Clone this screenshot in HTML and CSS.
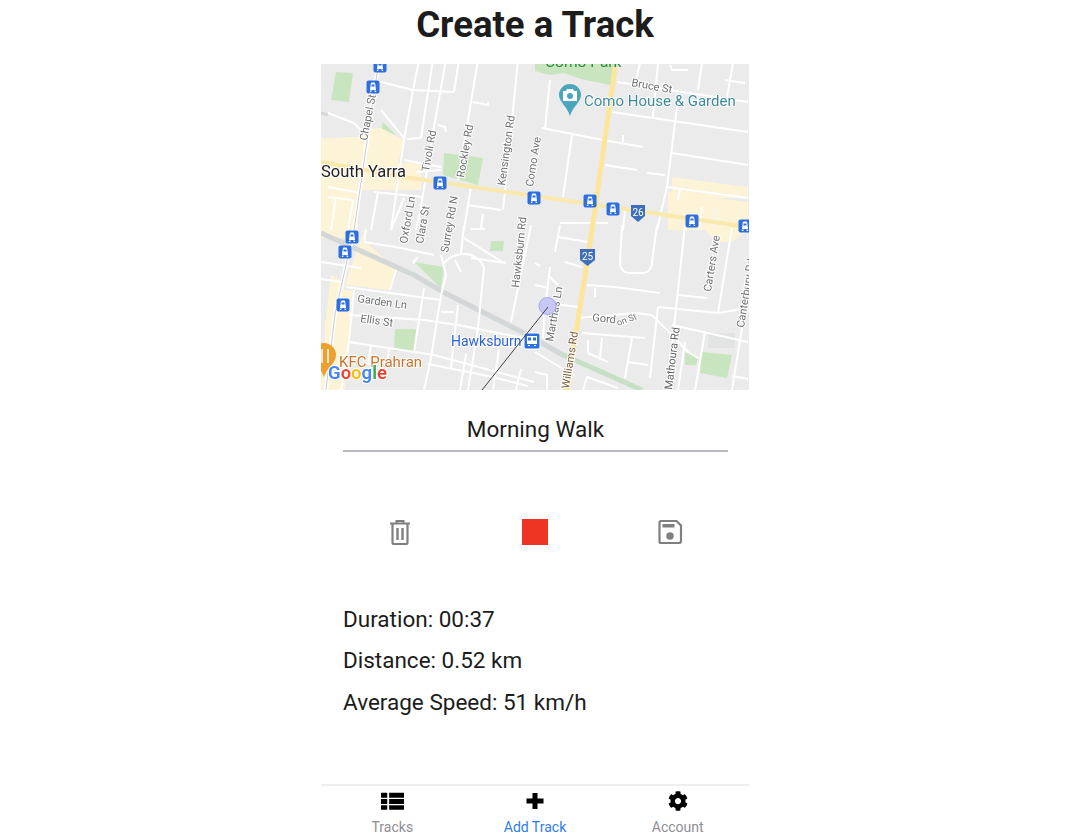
FILE: index.html
```html
<!DOCTYPE html>
<html lang="en">
<head>
  <meta charset="UTF-8" />
  <meta name="viewport" content="width=device-width, initial-scale=1.0"/>
  <title>Create a Track</title>
  <link rel="stylesheet" href="styles.css">
</head>
<body>
  <div class="app">
    <h1 class="title">Create a Track</h1>

    <svg class="map" viewBox="0 0 428 326" width="428" height="326">
      <defs>
        <symbol id="stop" viewBox="0 0 14 14">
          <rect x="0.5" y="0.5" width="13" height="13" rx="2" fill="#2d6fe0"/>
          <path d="M5.500 2.500h3l.8 1.500.7 6H4l.7-6zM4.500 10.500h1.500l-1 1.500H3.500zM8 10.500h1.500l1 1.500H9z" fill="#fff"/>
          <rect x="5.500" y="4.500" width="3" height="2" fill="#2d6fe0"/>
        </symbol>
      </defs>

      <rect width="428" height="326" fill="#ebebeb"/>

      <!-- parks -->
      <g fill="#c8e5c0">
        <path d="M15 8l17 1-4 29-18-2z"/>
        <path d="M62 58l13 13-15-3z"/>
        <path d="M123 89l39 5-5 27-35-10z"/>
        <path d="M214-4h83l-3 26-34-7-17-6-14 2-15-4z"/>
        <path d="M170 177h13l-1 10h-13z"/>
        <path d="M93 198l30 5-3 21z"/>
        <path d="M74 265h21l-1 22H73z"/>
        <path d="M381 288l30 3-5 23-27-5z"/>
        <path d="M364 288l13 6-2 7h-11z"/>
      </g>
      <path d="M387 269h27v15h-27z" fill="#e2e3e3"/>

      <!-- commercial areas -->
      <g fill="#fdf3d6">
        <path d="M0 74l15 0 10-1 15 0 5-7 15-2 23 12-6 23h23v27H37v48H0z"/>
        <path d="M45 161l0 17 30 28-7 20-41-5-17-10-6 50L0 326h24l8-100h-10z"/>
        <path d="M351 113l76 10v11h-76z"/>
        <path d="M347 128l80 10v28l-16 12h-17l-10-12h-37z"/>
      </g>

      <!-- rail line -->
      <path d="M0 169l93 42 29 17 85 43 33 19" fill="none" stroke="#d4d7d8" stroke-width="5"/>
      <path d="M240 290l81 36" fill="none" stroke="#c7dfc4" stroke-width="5"/>
      <path d="M0 49l7 2" fill="none" stroke="#d4d7d8" stroke-width="3"/>

      <!-- streets -->
      <g fill="none" stroke="#fff" stroke-width="2" stroke-linejoin="round">
        <!-- upper left -->
        <path d="M52 16l40 10 41 2"/>
        <path d="M98-4L92 26 83 76 70 166"/>
        <path d="M125-4L113 63 100 143 95 166"/>
        <path d="M112-4l-12 78-14 1"/>
        <path d="M138-4l-5 32"/>
        <path d="M157-4l-20 120"/>
        <path d="M152 38l15 3v-3"/>
        <path d="M197-4l-15 150"/>
        <path d="M7 49l26 10 7 7"/>
        <path d="M60 46l23 28"/>
        <path d="M117 61l7 2 1 5"/>
        <path d="M83 96l37 7"/>
        <path d="M95 108l25-2"/>
        <path d="M7 123l33 6"/>
        <path d="M53 128l50 5"/>
        <path d="M7 133l25 3"/>
        <path d="M150 123l-7 43"/>
        <path d="M147 141l33 5"/>
        <path d="M162 150l-2 14M150 165h14"/>
        <path d="M83 134l-13 32M57 128l-7 38M15 133l-5 33M32 136l-5 30"/>

        <!-- upper right -->
        <path d="M229 16l-5 48"/>
        <path d="M221 64l61 12 40 7"/>
        <path d="M302 71v7"/>
        <path d="M251 71l-9 62"/>
        <path d="M284 101l32 5"/>
        <path d="M326 109l18 2"/>
        <path d="M296 18l131 20"/>
        <path d="M291 48l136 20"/>
        <path d="M319-1l-5 22"/>
        <path d="M337-1l-5 54"/>
        <path d="M381-1l-4 27"/>
        <path d="M412-1l-6 34"/>
        <path d="M404 16l20 3"/>
        <path d="M349 1l2 5h16"/>
        <path d="M356 43l-10 80-10 43"/>
        <path d="M351 89l76 12"/>
        <path d="M346 123l81 11"/>
        <path d="M239 159h48"/>
        <path d="M359 126l-2 10"/>
        <path d="M381 143l-3 23"/>
        <path d="M304 146l-2 20"/>
        <path d="M394 143v20" stroke="#f4f4f4"/>

        <!-- lower left -->
        <path d="M43 178l37 6 33 7"/>
        <path d="M45 166l-2 12"/>
        <path d="M120 191l5 20-5 20-10 63-7 32"/>
        <path d="M123 199c6-7 13-9 20-9 10 0 17 6 20 14l-6 60-10 62"/>
        <path d="M143 161l-3 28"/>
        <path d="M143 174l40 25"/>
        <path d="M134 196l6 12"/>
        <path d="M150 194l35 5"/>
        <path d="M210 161l-20 97"/>
        <path d="M25 223l95 13"/>
        <path d="M103 224l-10 64"/>
        <path d="M28 251l75 5 34 5 70 14"/>
        <path d="M28 278l85 13 100 27"/>
        <path d="M33 226l-5 52-8 48"/>
        <path d="M50 281l-3 20M68 285l-3 20"/>
        <path d="M137 241l-7 63"/>
        <path d="M120 248h13"/>
        <path d="M75 206l-6 20M97 193l-5 6"/>
        <path d="M0 198l40 6M0 215l20 3"/>
        <path d="M0 290l8 1"/>
        <path d="M145 290l-6 36M178 285l-6 41M200 305l-5 21"/>
        <path d="M107 300l60 12 40 10"/>

        <!-- lower right -->
        <path d="M239 161l-5 27"/>
        <path d="M237 173l30 5"/>
        <path d="M214 199l5 3"/>
        <path d="M229 203l-5 41-2 30"/>
        <path d="M227 211l10 10"/>
        <path d="M214 221l14 3"/>
        <path d="M227 239l30 4"/>
        <path d="M244 198l17 5"/>
        <path d="M266 221l28 2 45 6"/>
        <path d="M274 224v9"/>
        <path d="M257 254l57-5 17 2 23 23 13 14 10 6"/>
        <path d="M301 161l-2 37c0 6 2 10 8 11h14c6 0 10-4 10-11l5-37"/>
        <path d="M364 161l-10 93-7 64"/>
        <path d="M337 243l-8 71"/>
        <path d="M337 243l60 6 30-5"/>
        <path d="M411 164l-14 85"/>
        <path d="M357 231l29 3"/>
        <path d="M351 261l76 17"/>
        <path d="M384 268l-10 58"/>
        <path d="M421 264l-10 62"/>
        <path d="M364 278l-7 48"/>
        <path d="M261 269l63 5"/>
        <path d="M311 274l-7 40"/>
        <path d="M281 274l-2 19"/>
        <path d="M267 276v13l20 9"/>
        <path d="M307 298l20 3"/>
        <path d="M262 326l4-13 31 11"/>
        <path d="M214 288l40 24"/>
        <path d="M214 308l12 3v15"/>
        <path d="M411 312l16 3"/>
      </g>

      <!-- chapel st -->
      <path d="M58-4L33 166 14 250 5 326" fill="none" stroke="#fff" stroke-width="4"/>
      <path d="M58-4L33 166 14 250 5 326" fill="none" stroke="#c8cbce" stroke-width="1"/>

      <!-- main roads -->
      <path d="M0 98l83 15 124 18 220 32" fill="none" stroke="#f9e9ac" stroke-width="4"/>
      <path d="M294 3l-23 163-25 160" fill="none" stroke="#fde59a" stroke-width="5"/>

      <!-- stops -->
      <use href="#stop" x="52" y="-5" width="14" height="14"/>
      <use href="#stop" x="45" y="16" width="14" height="14"/>
      <use href="#stop" x="112" y="112" width="14" height="14"/>
      <use href="#stop" x="206" y="127" width="14" height="14"/>
      <use href="#stop" x="262" y="130" width="14" height="14"/>
      <use href="#stop" x="285" y="138" width="14" height="14"/>
      <use href="#stop" x="364" y="150" width="14" height="14"/>
      <use href="#stop" x="417" y="155" width="14" height="14"/>
      <use href="#stop" x="24" y="166" width="14" height="14"/>
      <use href="#stop" x="17" y="181" width="14" height="14"/>
      <use href="#stop" x="15" y="234" width="14" height="14"/>

      <!-- shields -->
      <path d="M310 141h14v11l-7 6-7-6z" fill="#3f6fba"/>
      <text class="shield" x="317" y="152">26</text>
      <path d="M259 185h15v11l-7.500 6-7.500-6z" fill="#3f6fba"/>
      <text class="shield" x="266.500" y="196">25</text>

      <!-- hawksburn station -->
      <rect x="203" y="269" width="16" height="16" rx="2" fill="#2d6fe0" stroke="#fff"/>
      <path d="M206 272h10v8h-10zM207 281h2v1h-2zM213 281h2v1h-2z" fill="#fff"/>
      <rect x="207" y="273.500" width="3" height="3" fill="#2d6fe0"/>
      <rect x="212" y="273.500" width="3" height="3" fill="#2d6fe0"/>

      <!-- poi pins -->
      <path d="M238 31a11 11 0 0 1 22 0c0 7-8 11-11 21-3-10-11-14-11-21z" fill="#4ba6bd"/>
      <path d="M242 27h3l1-2h6l1 2h3v10h-14z" fill="#fff"/>
      <circle cx="249" cy="32" r="3" fill="#4ba6bd"/>
      <path d="M-9 291a12 12 0 0 1 24 0c0 8-8 11-12 22-4-11-12-14-12-22z" fill="#eda02f"/>
      <path d="M1 285v14M7 285v14" stroke="#fff" stroke-width="1.500"/>

      <!-- labels -->
      <g class="label">
        <text class="road" transform="translate(46 77) rotate(-79)">Chapel St</text>
        <text class="road" transform="translate(108 108) rotate(-80)">Tivoli Rd</text>
        <text class="road" transform="translate(143 114) rotate(-80)">Rockley Rd</text>
        <text class="road" transform="translate(184 122) rotate(-82)">Kensington Rd</text>
        <text class="road" transform="translate(212 123) rotate(-81)">Como Ave</text>
        <text class="road" transform="translate(310 22) rotate(10)">Bruce St</text>
        <text class="road" transform="translate(86 180) rotate(-80)">Oxford Ln</text>
        <text class="road" transform="translate(102 180) rotate(-80)">Clara St</text>
        <text class="road" transform="translate(127 189) rotate(-80)">Surrey Rd N</text>
        <text class="road" transform="translate(198 224) rotate(-84)">Hawksburn Rd</text>
        <text class="road" transform="translate(36 238) rotate(8)">Garden Ln</text>
        <text class="road" transform="translate(39 258) rotate(8)">Ellis St</text>
        <text class="road" transform="translate(232 278) rotate(-80)">Marthas Ln</text>
        <text class="road" transform="translate(271 257) rotate(6)">Gord</text>
        <text class="road road-small" transform="translate(297 262) rotate(-20)">on St</text>
        <text class="road" transform="translate(390 228) rotate(-81)">Carters Ave</text>
        <text class="road" transform="translate(423 264) rotate(-81)">Canterbury Rd</text>
        <text class="road road-dark" transform="translate(351 326) rotate(-83)">Mathoura Rd</text>
        <text class="road road-brown" transform="translate(248 325) rotate(-81)">Williams Rd</text>
        <text class="suburb" x="0" y="113">South Yarra</text>
        <text class="poi" x="263" y="42">Como House &amp; Garden</text>
        <text class="park" x="224" y="3">Como Park</text>
        <text class="station" x="130" y="282">Hawksburn</text>
        <text class="kfc" x="18" y="303">KFC Prahran</text>
        <text class="google" x="7" y="315"><tspan fill="#4285f4">G</tspan><tspan fill="#ea4335">o</tspan><tspan fill="#fbbc05">o</tspan><tspan fill="#4285f4">g</tspan><tspan fill="#34a853">l</tspan><tspan fill="#ea4335">e</tspan></text>
      </g>

      <!-- recorded track -->
      <circle cx="226.500" cy="242" r="8.500" fill="#c9c7f5" stroke="#a9a8ea" stroke-width="1"/>
      <path d="M227 243l-66 83" fill="none" stroke="#444" stroke-width="1"/>
    </svg>

    <input class="track-name" type="text" value="Morning Walk" />

    <div class="controls">
      <svg class="control" viewBox="0 0 24 28" width="24" height="28">
        <path d="M2 5.500h20M8.500 5V3h7v2" fill="none" stroke="#808080" stroke-width="2"/>
        <path d="M4.500 6v18.500a1.500 1.500 0 0 0 1.500 1.500h12a1.500 1.500 0 0 0 1.500-1.500V6" fill="none" stroke="#808080" stroke-width="2.200"/>
        <path d="M9.500 10v12M14.500 10v12" fill="none" stroke="#808080" stroke-width="2.400"/>
      </svg>
      <div class="stop-button"></div>
      <svg class="control" viewBox="0 0 26 26" width="26" height="26">
        <path d="M2.500 3.500a1.500 1.500 0 0 1 1.500-1.500h15.500l4.500 4.500v15.500a2 2 0 0 1-2 2H4a1.500 1.500 0 0 1-1.500-1.500z" fill="none" stroke="#808080" stroke-width="2.200"/>
        <rect x="5.500" y="5" width="12" height="3.500" fill="#808080"/>
        <circle cx="13" cy="17" r="3.800" fill="#808080"/>
      </svg>
    </div>

    <div class="stats">
      <p>Duration: 00:37</p>
      <p>Distance: 0.52 km</p>
      <p>Average Speed: 51 km/h</p>
    </div>

    <nav class="tabbar">
      <a class="tab">
        <svg viewBox="0 0 24 20" width="23" height="19">
          <path d="M0 1.500h6.500v5H0zM8.500 1.500H24v5H8.500zM0 8h6.500v5H0zM8.500 8H24v5H8.500zM0 14.500h6.500v4.500H0zM8.500 14.500H24v4.500H8.500z" fill="#000"/>
        </svg>
        <span>Tracks</span>
      </a>
      <a class="tab active">
        <svg viewBox="0 0 20 20" width="20" height="20">
          <path d="M7.500 2h5v5.500H18.500v5H12.500V18h-5v-5.500H1.500v-5H7.500z" fill="#000"/>
        </svg>
        <span>Add Track</span>
      </a>
      <a class="tab">
        <svg viewBox="0 0 512 512" width="20" height="20">
          <path d="M487.4 315.7l-42.6-24.6c4.3-23.2 4.3-47 0-70.2l42.6-24.6c4.9-2.8 7.1-8.6 5.500-14-11.100-35.600-30-67.800-54.700-94.600-3.800-4.100-10-5.100-14.800-2.300L380.800 110c-17.900-15.400-38.500-27.300-60.800-35.100V25.800c0-5.600-3.900-10.500-9.400-11.700-36.700-8.200-74.300-7.800-109.200 0-5.500 1.200-9.400 6.100-9.400 11.700V75c-22.200 7.900-42.800 19.800-60.800 35.100L88.700 85.500c-4.900-2.800-11-1.900-14.800 2.300-24.700 26.700-43.600 58.900-54.700 94.600-1.700 5.400.6 11.200 5.500 14L67.300 221c-4.300 23.200-4.300 47 0 70.200l-42.600 24.600c-4.900 2.800-7.100 8.600-5.500 14 11.100 35.600 30 67.800 54.700 94.600 3.800 4.100 10 5.100 14.800 2.300l42.600-24.600c17.900 15.400 38.500 27.300 60.800 35.100v49.200c0 5.600 3.900 10.500 9.400 11.700 36.700 8.200 74.300 7.800 109.200 0 5.500-1.200 9.400-6.100 9.400-11.700v-49.200c22.200-7.900 42.800-19.800 60.800-35.100l42.600 24.600c4.900 2.800 11 1.900 14.800-2.300 24.700-26.700 43.600-58.900 54.700-94.600 1.500-5.500-.7-11.300-5.600-14.100zM256 336c-44.100 0-80-35.900-80-80s35.900-80 80-80 80 35.900 80 80-35.900 80-80 80z" fill="#000"/>
        </svg>
        <span>Account</span>
      </a>
    </nav>
  </div>
</body>
</html>
```

FILE: styles.css
```css
body {
  font-family: Roboto, "Liberation Sans", sans-serif;
  margin: 0;
  background: #fff;
  color: #1c1c1c;
}

.app {
  width: 428px;
  height: 835px;
  margin-left: 321px;
  display: flex;
  flex-direction: column;
  overflow: hidden;
}

.title {
  margin: 0;
  height: 50px;
  line-height: 50px;
  font-size: 36.600px;
  font-weight: 700;
  text-align: center;
}

.map {
  display: block;
  margin-top: 14px;
  flex: none;
  filter: blur(0.45px);
}

.label text {
  font-family: Roboto, sans-serif;
}

.road {
  font-size: 11px;
  fill: #6d7072;
  stroke: #fff;
  stroke-width: 2px;
  paint-order: stroke;
}

.road-small {
  font-size: 9px;
}

.road-dark {
  fill: #5f6265;
}

.road-brown {
  fill: #7c5a36;
}

.suburb {
  font-size: 16.500px;
  fill: #222;
  stroke: #fff;
  stroke-width: 2px;
  paint-order: stroke;
}

.poi {
  font-size: 15px;
  fill: #3c8a9c;
  stroke: #fff;
  stroke-width: 2px;
  paint-order: stroke;
}

.park {
  font-size: 15.500px;
  fill: #2e8b3f;
}

.station {
  font-size: 14px;
  fill: #2a62d4;
  stroke: #fff;
  stroke-width: 2px;
  paint-order: stroke;
}

.kfc {
  font-size: 15px;
  fill: #c9742a;
  stroke: #fff;
  stroke-width: 2px;
  paint-order: stroke;
}

.google {
  font-family: "Open Sans", sans-serif;
  font-size: 18.500px;
  font-weight: 600;
  stroke: #fff;
  stroke-width: 2px;
  paint-order: stroke;
}

.shield {
  font-size: 10px;
  fill: #fff;
  text-anchor: middle;
}

.track-name {
  display: block;
  flex: none;
  box-sizing: border-box;
  width: 385px;
  height: 62px;
  margin-left: 22px;
  padding: 18px 0 0;
  border: none;
  border-bottom: 2px solid #b9b9c1;
  outline: none;
  font-family: inherit;
  font-size: 22.500px;
  color: #1c1c1c;
  text-align: center;
  background: transparent;
}

.controls {
  display: grid;
  grid-template-columns: 1fr 1fr 1fr;
  align-items: center;
  justify-items: center;
  flex: none;
  height: 28px;
  margin: 66px 11px 0 11px;
}

.control {
  display: block;
}

.stop-button {
  width: 26px;
  height: 26px;
  background: #ee3524;
}

.stats {
  margin: 53px 0 0 22px;
  font-size: 22.500px;
  line-height: 41.300px;
}

.stats p {
  margin: 0;
}

.tabbar {
  display: grid;
  grid-template-columns: 1fr 1fr 1fr;
  margin-top: auto;
  height: 51px;
  border-top: 2px solid #eeeeee;
  box-sizing: border-box;
}

.tab {
  display: flex;
  flex-direction: column;
  align-items: center;
  color: #8e8e93;
  font-size: 14px;
  padding-top: 5px;
}

.tab svg {
  display: block;
  height: 20px;
  margin-bottom: 8px;
}

.tab.active {
  color: #2f7cf0;
}
```
